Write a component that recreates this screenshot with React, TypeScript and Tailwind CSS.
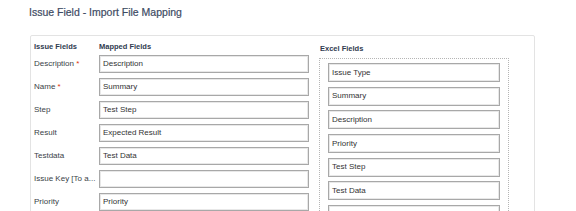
import React from 'react'

const mapped = [
  { label: 'Description', required: true, value: 'Description' },
  { label: 'Name', required: true, value: 'Summary' },
  { label: 'Step', required: false, value: 'Test Step' },
  { label: 'Result', required: false, value: 'Expected Result' },
  { label: 'Testdata', required: false, value: 'Test Data' },
  { label: 'Issue Key [To a...', required: false, value: '' },
  { label: 'Priority', required: false, value: 'Priority' },
]

const excel = ['Issue Type', 'Summary', 'Description', 'Priority', 'Test Step', 'Test Data', '']

const App: React.FC = () => {
  return (
    <div className="w-[576px] h-[211px] overflow-hidden bg-white text-[#333333] font-['Liberation_Sans',Arial,sans-serif]">
      <div className="pl-[29px] pt-[5px] h-[35px] text-[10.5px] text-[#3d4b63] [-webkit-text-stroke:0.2px_#3d4b63]">Issue Field - Import File Mapping</div>
      <div className="ml-[30px] w-[505px] h-[200px] border border-[#e3e3e3] rounded-[2px] flex">
        <div className="w-[280px] pl-[3px] pt-[3px]">
          <div className="flex h-[16px] items-center text-[7.5px] font-bold text-[#2f3b4f]">
            <div className="w-[65px]">Issue Fields</div>
            <div>Mapped Fields</div>
          </div>
          <div className="flex flex-col gap-[5px]">
            {mapped.map(m => (
              <div key={m.label} className="flex h-[18px]">
                <div className="w-[65px] text-[8px] text-[#3a3f47] pt-[3px] truncate pr-[2px]">
                  {m.label}{m.required && <span className="text-[#de350b]"> *</span>}
                </div>
                <div className="w-[210px] h-[18px] border border-[#a8a8a8] shadow-[inset_0_0_0_1px_#e8e8e8] flex items-center pl-[3px] text-[8px] text-[#333]">
                  {m.value}
                </div>
              </div>
            ))}
          </div>
        </div>
        <div className="pl-[8px] pt-[5px]">
          <div className="h-[16px] flex items-center pl-[1px] text-[7.5px] font-bold text-[#2f3b4f]">Excel Fields</div>
          <div className="mt-[1px] w-[190px] border border-dotted border-[#b5b5b5] px-[8px] pt-[4px] flex flex-col gap-[4.7px]">
            {excel.map((e, i) => (
              <div key={i} className="h-[19px] shrink-0 border border-[#a8a8a8] shadow-[inset_0_0_0_1px_#e8e8e8] flex items-center pl-[3px] text-[8px] text-[#333]">
                {e}
              </div>
            ))}
          </div>
        </div>
      </div>
    </div>
  )
}

export default App
